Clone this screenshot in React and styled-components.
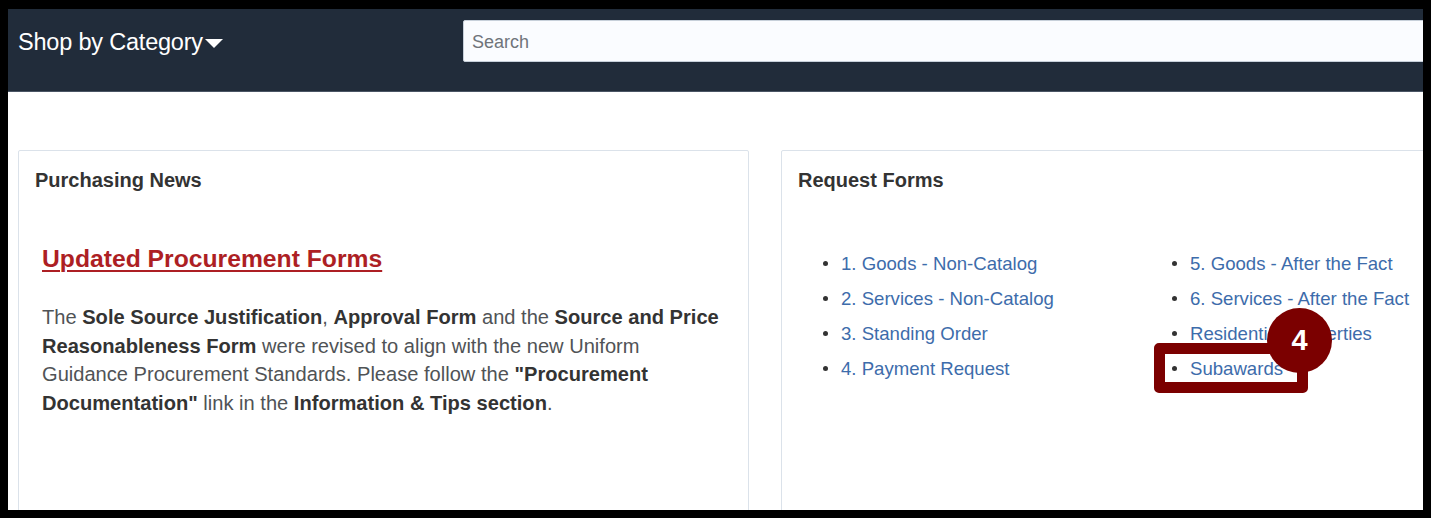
import styled, { createGlobalStyle } from 'styled-components';

const GlobalStyle = createGlobalStyle`
  html, body {
    margin: 0;
    padding: 0;
    background: #000;
    font-family: "Liberation Sans", Arial, sans-serif;
  }
  * { box-sizing: border-box; }
`;

const Frame = styled.div`
  width: 1431px;
  height: 518px;
  padding: 9px 8px 8px 8px;
  background: #000;
`;

const Screen = styled.div`
  width: 100%;
  height: 100%;
  background: #fff;
  overflow: hidden;
`;

const Page = styled.div`
  width: 1540px;
`;

const Header = styled.header`
  height: 83px;
  background: #212c3a;
  border-bottom: 1px solid #4a5564;
  display: grid;
  grid-template-columns: 445px 1fr;
  align-items: start;
  padding: 11px 0 0 10px;
`;

const CategoryButton = styled.div`
  display: flex;
  align-items: center;
  height: 42px;
  padding-top: 3px;
  color: #fff;
  font-size: 23.5px;
  letter-spacing: -0.2px;
  cursor: pointer;
`;

const Caret = styled.span`
  width: 0;
  height: 0;
  margin-left: 2px;
  margin-top: 1px;
  border-left: 9.5px solid transparent;
  border-right: 9.5px solid transparent;
  border-top: 9px solid #fff;
`;

const SearchInput = styled.input`
  width: 1070px;
  height: 42px;
  border: 1px solid #c7d0da;
  border-radius: 2px;
  background: #fafcff;
  padding: 2px 8px 0 8px;
  font-family: "Liberation Sans", Arial, sans-serif;
  font-size: 18px;
  color: #333;
  outline: none;

  &::placeholder {
    color: #6f747a;
  }
`;

const Main = styled.main`
  display: grid;
  grid-template-columns: 731px 731px;
  gap: 32px;
  padding: 58px 10px 0 10px;
`;

const Card = styled.section`
  border: 1px solid #dbe2ea;
  border-radius: 2px;
  min-height: 420px;
  padding: 17px 16px 16px 16px;
`;

const CardTitle = styled.h2`
  margin: 0;
  font-size: 20px;
  line-height: 24px;
  font-weight: bold;
  color: #333;
`;

const NewsBody = styled.div`
  padding: 52px 0 0 7px;
`;

const Headline = styled.a`
  display: block;
  font-size: 24.7px;
  line-height: 30px;
  font-weight: bold;
  color: #ad1f24;
  text-decoration: underline;
  text-decoration-thickness: 2px;
  text-underline-offset: 3px;
  cursor: pointer;
`;

const Paragraph = styled.p`
  margin: 29px 0 0 0;
  font-size: 20.1px;
  line-height: 28.5px;
  color: #505356;
  width: 682px;

  b {
    color: #333;
  }
`;

const FormList = styled.ul`
  list-style: none;
  margin: 0;
  padding: 54px 0 0 25px;
  display: grid;
  grid-template-columns: 349px 349px;
  grid-template-rows: repeat(4, 35px);
  grid-auto-flow: column;
`;

const FormItem = styled.li`
  position: relative;
  display: flex;
  align-items: center;
  font-size: 18.6px;
  color: #333;

  &::before {
    content: "";
    width: 5px;
    height: 5px;
    border-radius: 50%;
    background: #333;
    margin-right: 13px;
    flex: none;
  }
`;

const FormLink = styled.a`
  color: #3d6cab;
  text-decoration: none;
  cursor: pointer;
`;

const HighlightBox = styled.div`
  position: absolute;
  left: -18px;
  top: -8px;
  width: 154px;
  height: 50px;
  border: 11px solid #7b0000;
  border-radius: 5px;
  pointer-events: none;
`;

const StepBadge = styled.div`
  position: absolute;
  left: 95px;
  top: -43px;
  width: 65px;
  height: 65px;
  border-radius: 50%;
  background: #7b0000;
  color: #fff;
  display: flex;
  align-items: center;
  justify-content: center;
  font-size: 29px;
  font-weight: bold;
  z-index: 2;
`;

const forms = [
  '1. Goods - Non-Catalog',
  '2. Services - Non-Catalog',
  '3. Standing Order',
  '4. Payment Request',
  '5. Goods - After the Fact',
  '6. Services - After the Fact',
  'Residential Properties',
  'Subawards',
];

const App = () => {
  return (
    <>
      <GlobalStyle />
      <Frame>
        <Screen>
          <Page>
            <Header>
              <CategoryButton>
                Shop by Category
                <Caret />
              </CategoryButton>
              <SearchInput placeholder="Search" />
            </Header>
            <Main>
              <Card>
                <CardTitle>Purchasing News</CardTitle>
                <NewsBody>
                  <Headline>Updated Procurement Forms</Headline>
                  <Paragraph>
                    The <b>Sole Source Justification</b>, <b>Approval Form</b> and the{' '}
                    <b>Source and Price Reasonableness Form</b> were revised to align with the new
                    Uniform Guidance Procurement Standards. Please follow the{' '}
                    <b>"Procurement Documentation"</b> link in the <b>Information &amp; Tips section</b>.
                  </Paragraph>
                </NewsBody>
              </Card>
              <Card>
                <CardTitle>Request Forms</CardTitle>
                <FormList>
                  {forms.map((f) => (
                    <FormItem key={f}>
                      <FormLink>{f}</FormLink>
                      {f === 'Subawards' && (
                        <>
                          <HighlightBox />
                          <StepBadge>4</StepBadge>
                        </>
                      )}
                    </FormItem>
                  ))}
                </FormList>
              </Card>
            </Main>
          </Page>
        </Screen>
      </Frame>
    </>
  );
};

export default App;
